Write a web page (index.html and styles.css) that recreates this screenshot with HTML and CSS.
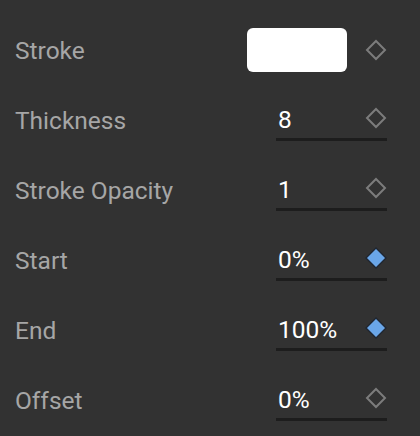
FILE: index.html
```html
<!DOCTYPE html>
<html>
<head>
<meta charset="utf-8">
<link rel="stylesheet" href="styles.css">
</head>
<body>
<div class="panel">
  <div class="row">
    <div class="label">Stroke</div>
    <div class="swatch"></div>
    <svg class="key" viewBox="0 0 22 22"><polygon points="11,2 20,11 11,20 2,11" class="hollow"/></svg>
  </div>
  <div class="row">
    <div class="label">Thickness</div>
    <div class="field"><span class="value">8</span><svg class="key" viewBox="0 0 22 22"><polygon points="11,2 20,11 11,20 2,11" class="hollow"/></svg></div>
  </div>
  <div class="row">
    <div class="label">Stroke Opacity</div>
    <div class="field"><span class="value">1</span><svg class="key" viewBox="0 0 22 22"><polygon points="11,2 20,11 11,20 2,11" class="hollow"/></svg></div>
  </div>
  <div class="row">
    <div class="label">Start</div>
    <div class="field"><span class="value">0%</span><svg class="key" viewBox="0 0 22 22"><polygon points="11,1 21,11 11,21 1,11" class="filled"/></svg></div>
  </div>
  <div class="row">
    <div class="label">End</div>
    <div class="field"><span class="value">100%</span><svg class="key" viewBox="0 0 22 22"><polygon points="11,1 21,11 11,21 1,11" class="filled"/></svg></div>
  </div>
  <div class="row">
    <div class="label">Offset</div>
    <div class="field"><span class="value">0%</span><svg class="key" viewBox="0 0 22 22"><polygon points="11,2 20,11 11,20 2,11" class="hollow"/></svg></div>
  </div>
</div>
</body>
</html>
```

FILE: styles.css
```css
html, body {
  margin: 0;
  padding: 0;
  background: #323232;
}
body {
  width: 420px;
  height: 436px;
  overflow: hidden;
  font-family: Roboto, "Liberation Sans", sans-serif;
}
.panel {
  padding-top: 15px;
}
.row {
  display: flex;
  align-items: center;
  height: 70px;
  padding: 0 33px 0 15px;
}
.label {
  flex: 1;
  color: #a6a6a6;
  font-size: 24.5px;
  padding-top: 1px;
}
.swatch {
  width: 100px;
  height: 44px;
  background: #ffffff;
  border-radius: 6px;
  margin-right: 18px;
}
.key {
  width: 22px;
  height: 22px;
  display: block;
}
.hollow {
  fill: none;
  stroke: #7c7c7c;
  stroke-width: 2;
}
.filled {
  fill: #6aa6e8;
  stroke: #1f2631;
  stroke-width: 1.4;
}
.field {
  width: 111px;
  box-sizing: border-box;
  display: flex;
  align-items: center;
  justify-content: space-between;
  padding: 0 0 1px 2px;
  border-bottom: 3px solid #1d1d1d;
  margin-top: 4px;
}
.field .key {
  margin-bottom: 4px;
}
.value {
  color: #ffffff;
  font-size: 24.5px;
  line-height: 34px;
}
```
